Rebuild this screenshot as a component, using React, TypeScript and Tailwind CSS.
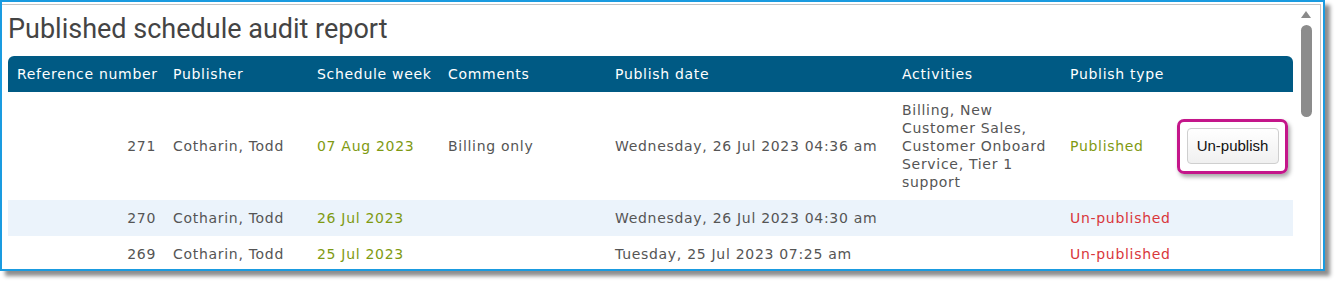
import React from "react"

type Row = {
  ref: number
  publisher: string
  week: string
  comments: string
  date: string
  activities: string
  published: boolean
}

const rows: Row[] = [
  {
    ref: 271,
    publisher: "Cotharin, Todd",
    week: "07 Aug 2023",
    comments: "Billing only",
    date: "Wednesday, 26 Jul 2023 04:36 am",
    activities: "Billing, New Customer Sales, Customer Onboard Service, Tier 1 support",
    published: true,
  },
  {
    ref: 270,
    publisher: "Cotharin, Todd",
    week: "26 Jul 2023",
    comments: "",
    date: "Wednesday, 26 Jul 2023 04:30 am",
    activities: "",
    published: false,
  },
  {
    ref: 269,
    publisher: "Cotharin, Todd",
    week: "25 Jul 2023",
    comments: "",
    date: "Tuesday, 25 Jul 2023 07:25 am",
    activities: "",
    published: false,
  },
]

export default function App() {
  return (
    <div className="w-[1335px] h-[282px] bg-white">
      <div className="w-[1325px] h-[271px] border-2 border-[#1a9be0] bg-white shadow-[5px_5px_4px_rgba(0,0,0,0.45)] overflow-hidden">
        <div className="mt-[2px] mr-[2px] h-full border-t border-r border-[#c4c4c4] flex">
          {/* Main content */}
          <div className="w-[1292px] pl-[6px]">
            <h1 className="pt-[8px] pb-[11px] text-[27px] leading-[32px] text-[#444] font-['Roboto',sans-serif]">
              Published schedule audit report
            </h1>

            <table className="w-[1285px] table-fixed border-collapse font-['DejaVu_Sans',sans-serif] text-[14px] leading-[18px] tracking-[0.7px] text-[#555]">
              <colgroup>
                <col className="w-[157px]" />
                <col className="w-[144px]" />
                <col className="w-[131px]" />
                <col className="w-[167px]" />
                <col className="w-[287px]" />
                <col className="w-[168px]" />
                <col className="w-[108px]" />
                <col className="w-[123px]" />
              </colgroup>
              <thead>
                <tr className="bg-[#005a84] text-white h-[36px]">
                  <th className="rounded-tl-[6px] text-left font-normal pl-[9px] pr-[4px] whitespace-nowrap">Reference number</th>
                  <th className="text-left font-normal px-[8px]">Publisher</th>
                  <th className="text-left font-normal px-[8px] whitespace-nowrap">Schedule week</th>
                  <th className="text-left font-normal px-[8px]">Comments</th>
                  <th className="text-left font-normal px-[8px]">Publish date</th>
                  <th className="text-left font-normal px-[8px]">Activities</th>
                  <th className="text-left font-normal px-[8px] whitespace-nowrap">Publish type</th>
                  <th className="rounded-tr-[6px]" />
                </tr>
              </thead>
              <tbody>
                {rows.map((r, i) => (
                  <tr key={r.ref} className={i % 2 === 1 ? "bg-[#ebf3fb]" : "bg-white"}>
                    <td className="text-right pl-[8px] pr-[9px] py-[9px]">{r.ref}</td>
                    <td className="px-[8px] py-[9px] whitespace-nowrap">{r.publisher}</td>
                    <td className="px-[8px] py-[9px] text-[#7f9a12] whitespace-nowrap">{r.week}</td>
                    <td className="px-[8px] py-[9px]">{r.comments}</td>
                    <td className="px-[8px] py-[9px] whitespace-nowrap">{r.date}</td>
                    <td className="px-[8px] py-[9px]">{r.activities}</td>
                    <td
                      className={`px-[8px] py-[9px] whitespace-nowrap ${
                        r.published ? "text-[#7f9a12]" : "text-[#d9373c]"
                      }`}
                    >
                      {r.published ? "Published" : "Un-published"}
                    </td>
                    <td className="px-[7px] py-[9px]">
                      {r.published && (
                        <div className="w-[111px] h-[55px] rounded-[7px] border-[3px] border-[#c4168a] shadow-[2px_3px_4px_rgba(0,0,0,0.35)] flex items-center justify-center">
                          <button className="w-[92px] h-[36px] rounded-[4px] border border-[#cfcfcf] bg-gradient-to-b from-white to-[#f0f0f0] text-[15px] tracking-normal text-[#111] font-['Liberation_Sans',sans-serif]">
                            Un-publish
                          </button>
                        </div>
                      )}
                    </td>
                  </tr>
                ))}
              </tbody>
            </table>
          </div>

          {/* Scrollbar */}
          <div className="w-[24px] flex flex-col items-center pt-[6px]">
            <svg width="10" height="7" viewBox="0 0 10 7">
              <path d="M5 0 L10 7 L0 7 Z" fill="#8a8a8a" />
            </svg>
            <div className="mt-[7px] w-[11px] h-[92px] rounded-full bg-[#8c8c8c]" />
          </div>
        </div>
      </div>
    </div>
  )
}
